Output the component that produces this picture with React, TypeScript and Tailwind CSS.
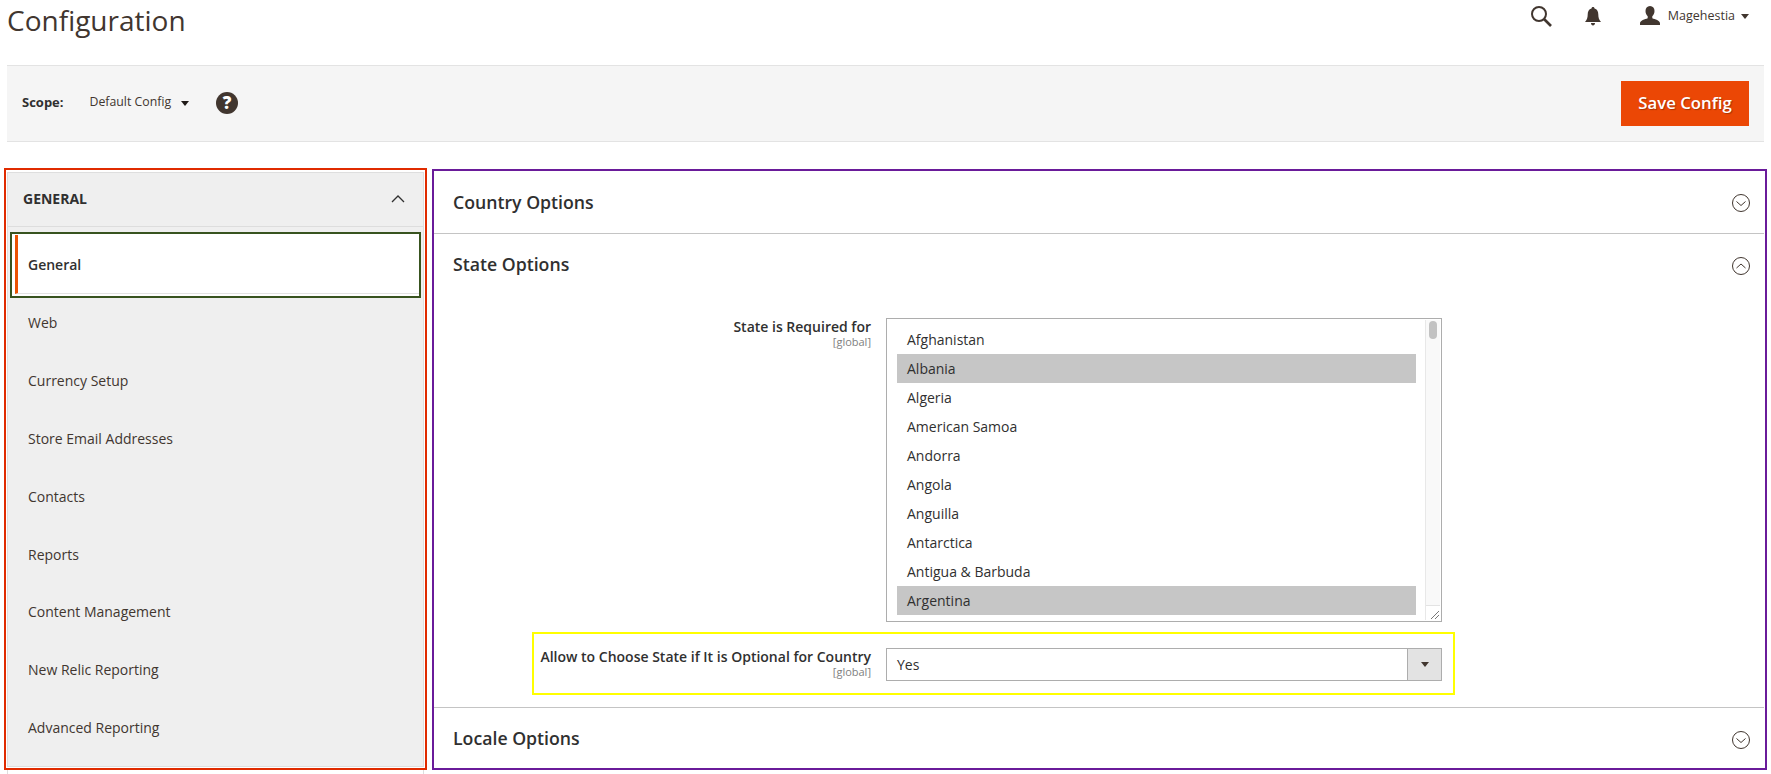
const menuItems = ['Web', 'Currency Setup', 'Store Email Addresses', 'Contacts', 'Reports', 'Content Management', 'New Relic Reporting', 'Advanced Reporting']

const countries = [
  { name: 'Afghanistan' },
  { name: 'Albania', selected: true },
  { name: 'Algeria' },
  { name: 'American Samoa' },
  { name: 'Andorra' },
  { name: 'Angola' },
  { name: 'Anguilla' },
  { name: 'Antarctica' },
  { name: 'Antigua & Barbuda' },
  { name: 'Argentina', selected: true },
]

function Caret({ className }: { className: string }) {
  return (
    <svg viewBox="0 0 8 5" className={className}>
      <path d="M0 0h8L4 5z" fill="currentColor" />
    </svg>
  )
}

function SectionHeader({ title, open, titleClass = '-mt-px' }: { title: string; open?: boolean; titleClass?: string }) {
  return (
    <div className="flex h-[62px] shrink-0 items-center justify-between pl-[19px] pr-[14px]">
      <h2 className={`text-[17.7px] font-semibold text-[#303030] ${titleClass}`}>{title}</h2>
      <svg viewBox="0 0 20 20" className="mt-[2px] h-[20px] w-[20px]" fill="none" stroke="#41362f" strokeWidth="1">
        <circle cx="10" cy="10" r="8.500" />
        <path d={open ? 'M5.500 12L10 8l4.500 4' : 'M5.500 8.500L10 12.500l4.500-4'} />
      </svg>
    </div>
  )
}

function FieldLabel({ text, className }: { text: string; className: string }) {
  return (
    <div className={`shrink-0 text-right ${className}`}>
      <div className="text-[14px] font-semibold leading-[18px] text-[#303030]">{text}</div>
      <div className="text-[11px] leading-[11px] text-[#808080]">[global]</div>
    </div>
  )
}

export default function App() {
  return (
    <div className="h-[774px] w-[1771px] overflow-hidden bg-white font-['Open_Sans',sans-serif] text-[#303030]">
      {/* Page title + admin actions */}
      <header className="flex h-[65px] items-start justify-between pl-[7px] pr-[22px]">
        <h1 className="mt-px text-[28px] leading-[38px] text-[#41362f]">Configuration</h1>
        <div className="mt-[5px] flex items-center text-[#41362f]">
          <svg viewBox="0 0 22 22" className="h-[22px] w-[22px]" fill="none" stroke="currentColor">
            <circle cx="9" cy="9" r="7" strokeWidth="2" />
            <path d="M14 14l7 7" strokeWidth="2.600" />
          </svg>
          <svg viewBox="0 0 16 19" className="ml-[33px] h-[19px] w-[16px]" fill="currentColor">
            <path d="M8 0c1 0 1.500.7 1.500 1.500C12.300 2.300 13.300 4.500 13.300 7.500c0 3 .6 5 2.700 7.500H0c2.100-2.500 2.700-4.500 2.700-7.500 0-3 1-5.200 3.800-6C6.500.7 7 0 8 0zM6 16h4c0 1.500-.8 2.500-2 2.500S6 17.500 6 16z" />
          </svg>
          <svg viewBox="0 0 20 20" className="ml-[39px] h-[20px] w-[20px]" fill="currentColor">
            <path d="M10 0c3 0 4.500 2.200 4.500 5 0 2.300-1 4.200-2.200 5.300v1.900C15 13.400 20 14 20 17.500V19H0v-1.500C0 14 5 13.400 7.700 12.200v-1.900C6.500 9.200 5.500 7.300 5.500 5 5.500 2.200 7 0 10 0z" />
          </svg>
          <span className="ml-[8px] text-[12.500px] leading-[20px]">Magehestia</span>
          <Caret className="ml-[6px] h-[5px] w-[8px]" />
        </div>
      </header>

      {/* Scope toolbar */}
      <div className="mx-[7px] flex h-[77px] items-center justify-between border-y border-[#e3e3e3] bg-[#f5f5f5] pl-[15px] pr-[15px]">
        <div className="-mt-[2px] flex items-center">
          <span className="text-[13px] font-bold">Scope:</span>
          <span className="ml-[26px] text-[12.300px] text-[#41362f]">Default Config</span>
          <Caret className="ml-[10px] mt-[2px] h-[5px] w-[8px] text-[#1f1a17]" />
          <span className="ml-[27px] flex h-[22px] w-[22px] items-center justify-center rounded-full bg-[#41362f] text-[17px] font-extrabold leading-none text-white">?</span>
        </div>
        <button className="h-[45px] w-[128px] bg-[#eb4705] pb-[2px] text-[16.800px] font-semibold text-white [text-shadow:1px_1px_1px_rgba(0,0,0,0.3)]">Save Config</button>
      </div>

      <div className="mt-[26px] flex items-start gap-[5px] pl-[4px]">
        <div className="w-[423px] shrink-0">
          {/* Sidebar, framed in red */}
          <nav className="h-[602px] overflow-hidden border-2 border-[#e02b00] px-px pb-px pt-[2px]">
            <div className="h-full border border-[#dedede] bg-[#efefef]">
              <div className="flex h-[54px] items-center justify-between border-b border-[#dddddd] pb-[2px] pl-[15px] pr-[18px]">
                <span className="text-[14px] font-bold uppercase">General</span>
                <svg viewBox="0 0 14 8" className="h-[8px] w-[14px]" fill="none" stroke="#303030" strokeWidth="1.300">
                  <path d="M1 7l6-6 6 6" />
                </svg>
              </div>
              <div className="ml-[2px] mr-[2px] mt-[5px] h-[66px] border-2 border-[#38531f] bg-white pb-[2px] pl-[3px] pt-[1px]">
                <div className="flex h-full items-center border-b border-[#e3e3e3] border-l-[3px] border-l-[#eb5202] pl-[10px] text-[14px] font-semibold">General</div>
              </div>
              <ul className="-mt-[4px]">
                {menuItems.map((item) => (
                  <li key={item} className="flex h-[57.800px] items-center pl-[20px] text-[14px] text-[#41362f]">{item}</li>
                ))}
              </ul>
            </div>
          </nav>
          <div className="mx-[3px] h-[4px] border-x border-[#dedede]" />
        </div>

        {/* Config sections, framed in purple */}
        <main className="mt-px flex h-[601px] w-[1335px] shrink-0 flex-col overflow-hidden border-2 border-[#6a1b9a]">
          <SectionHeader title="Country Options" titleClass="mt-px" />
          <div className="mr-px h-px shrink-0 bg-[#c4c4c4]" />
          <SectionHeader title="State Options" open />

          <div className="mt-[22px] flex shrink-0 gap-[15px]">
            <FieldLabel text="State is Required for" className="w-[437px]" />
            <div className="flex h-[304px] w-[556px] border border-[#adadad] p-px">
              <ul className="w-[539px] pl-[9px] pr-[9px] pt-[5px]">
                {countries.map((c) => (
                  <li key={c.name} className={`flex h-[29px] items-center pl-[10px] text-[14px] text-[#303030] ${c.selected ? 'bg-[#c6c6c6]' : ''}`}>{c.name}</li>
                ))}
              </ul>
              <div className="flex w-[15px] flex-col border-l border-[#e8e8e8] bg-[#f9f9f9]">
                <div className="mx-[3px] mt-px h-[18px] rounded-full bg-[#c2c2c2]" />
                <div className="mt-auto flex h-[15px] items-end justify-end border-t border-[#e3e3e3] bg-white">
                  <svg viewBox="0 0 10 10" className="h-[10px] w-[10px]" stroke="#555" strokeWidth="0.8">
                    <path d="M1 9l8-8M5 9l4-4" />
                  </svg>
                </div>
              </div>
            </div>
          </div>

          {/* Highlighted field, framed in yellow */}
          <div className="ml-[98px] mt-[10px] flex h-[63px] w-[923px] shrink-0 gap-[15px] border-2 border-[#ffff00] pt-[14px]">
            <FieldLabel text="Allow to Choose State if It is Optional for Country" className="w-[337px]" />
            <div className="flex h-[33px] w-[556px] border border-[#adadad]">
              <span className="flex flex-1 items-center pl-[10px] text-[14px] text-[#303030]">Yes</span>
              <span className="flex w-[34px] items-center justify-center border-l border-[#adadad] bg-[#e3e3e3] text-[#41362f]">
                <Caret className="h-[5px] w-[8px]" />
              </span>
            </div>
          </div>

          <div className="mr-px mt-[12px] h-px shrink-0 bg-[#c4c4c4]" />
          <SectionHeader title="Locale Options" />
        </main>
      </div>
    </div>
  )
}
